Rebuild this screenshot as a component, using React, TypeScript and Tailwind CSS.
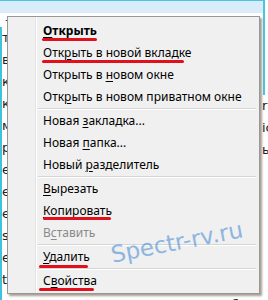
import React from "react";

type Item = {
  label: string;
  key: number;
  bold?: boolean;
  disabled?: boolean;
  mark?: { left: number; width: number; top: number };
};
type Entry = Item | "sep";

const entries: Entry[] = [
  { label: "Открыть", key: 0, bold: true, mark: { left: 34, width: 55, top: 18 } },
  { label: "Открыть в новой вкладке", key: 3, mark: { left: 34, width: 142, top: 18 } },
  { label: "Открыть в новом окне", key: 10 },
  { label: "Открыть в новом приватном окне", key: 3 },
  "sep",
  { label: "Новая закладка...", key: 6 },
  { label: "Новая папка...", key: 6 },
  { label: "Новый разделитель", key: 6 },
  "sep",
  { label: "Вырезать", key: 0 },
  { label: "Копировать", key: 0, mark: { left: 35, width: 68, top: 17 } },
  { label: "Вставить", key: 1, disabled: true },
  "sep",
  { label: "Удалить", key: 0, mark: { left: 31, width: 49, top: 19 } },
  "sep",
  { label: "Свойства", key: 1, mark: { left: 31, width: 55, top: 18 } },
];

// обрывки текста страницы, которые видны из-под меню
const leftBits = ["тр", "в", "ко", "ка", "м", "р", "ек", "е", "е", "s", "е", "tl"];
const rightBits = ["ru", "іс", "ь."];

function MenuRow({ item }: { item: Item }) {
  const before = item.label.slice(0, item.key);
  const ch = item.label.charAt(item.key);
  const after = item.label.slice(item.key + 1);
  return (
    <div
      className={`relative h-[22px] pl-[35px] leading-[22px] whitespace-nowrap ${
        item.bold ? "font-bold" : ""
      } ${item.disabled ? "text-[#8a8a8a]" : "text-black"}`}
    >
      {before}
      <span className="underline decoration-1 underline-offset-2">{ch}</span>
      {after}
      {item.mark && (
        <span
          className="absolute h-[3px] rounded-full bg-[#e0101c]"
          style={{ left: item.mark.left, width: item.mark.width, top: item.mark.top }}
        />
      )}
    </div>
  );
}

export default function App() {
  return (
    <div className="relative flex h-[300px] w-[268px] flex-col overflow-hidden bg-white font-['DejaVu_Sans',sans-serif] text-[13px] text-[#222]">
      {/* страница за меню */}
      <div className="mr-[3px] h-[13px] shrink-0 border-r-2 border-t border-[#4cc6df] bg-[#d9ecf9]" />
      <div className="mr-[3px] shrink-0 whitespace-nowrap border-r-2 border-[#4cc6df] pl-[5px] leading-[14px]">
        – что это за программа
      </div>
      <div className="flex flex-1">
        <div className="flex flex-col border-l-2 border-[#3fc3dc]">
          {leftBits.map((t, i) => (
            <div key={i} className="h-[22px] leading-[22px]">
              {t}
            </div>
          ))}
          <div className="whitespace-nowrap pl-[38px] pt-[7px] leading-[14px]">
            он Сн&nbsp;&nbsp;&nbsp;он&nbsp;&nbsp;&nbsp;&nbsp;&nbsp;ненн ааа&nbsp;&nbsp;&nbsp;&nbsp;&nbsp;аБ б
          </div>
        </div>
        <div className="flex-1" />
        <div className="flex w-[6px] flex-col">
          <div className="ml-[1px] h-[68px] w-[2px] bg-[#4cc6df]" />
          {rightBits.map((t, i) => (
            <div key={i} className="h-[22px] whitespace-nowrap leading-[22px]">
              {t}
            </div>
          ))}
        </div>
      </div>

      {/* контекстное меню */}
      <div className="absolute left-[7px] top-[16px] w-[253px] border border-[#979797] bg-[#f0f0f0] pb-[1px] pt-[3px] font-['Noto_Sans',sans-serif] text-[12px] shadow-[2px_2px_2px_rgba(60,40,20,0.45)]">
        <div className="absolute bottom-0 left-[27px] top-0 w-[2px] border-l border-[#e2e3e3] bg-white" />
        {entries.map((e, i) =>
          e === "sep" ? (
            <div key={i} className="ml-[30px] mr-[3px] h-[2px] border-t border-[#d5d5d5] bg-white" />
          ) : (
            <MenuRow key={i} item={e} />
          )
        )}
      </div>

      {/* водяной знак */}
      <div className="pointer-events-none absolute left-[110px] top-[231px] -rotate-[11deg] whitespace-nowrap font-['DejaVu_Sans',sans-serif] text-[23px] leading-none text-[#4a8fd6] opacity-60">
        Spectr-rv.ru
      </div>
    </div>
  );
}
